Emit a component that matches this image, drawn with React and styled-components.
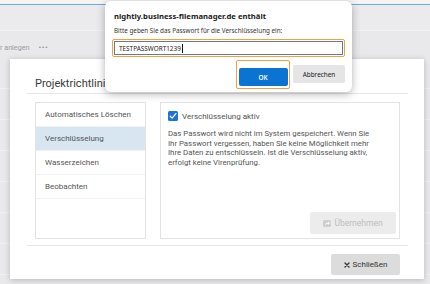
import React from "react";
import styled, { createGlobalStyle } from "styled-components";

const Global = createGlobalStyle`
  html, body { margin: 0; padding: 0; }
  body {
    width: 430px; height: 284px; overflow: hidden;
    background: #e9e9eb;
    font-family: Roboto, "Liberation Sans", sans-serif;
  }
`;

const Page = styled.div`
  position: relative;
  width: 430px;
  height: 284px;
  overflow: hidden;
  background: #e9e9eb;
`;

const TopStrip = styled.div`
  height: 4px;
  background: #f4f4f5;
  border-bottom: 1.5px solid #6ea8e2;
`;

const Toolbar = styled.div`
  height: 25px;
  background: #ebebed;
  border-bottom: 1px solid #f2f2f3;
`;

const ActionRow = styled.div`
  height: 27px;
  box-sizing: border-box;
  display: flex;
  align-items: flex-end;
  padding-bottom: 6px;
  gap: 9px;
  color: #9b9b9d;
  font-size: 7.2px;
  line-height: 9px;
`;

const Dots = styled.span`
  font-size: 8px;
  letter-spacing: 0.5px;
  color: #8f8f91;
`;

const BgRow = styled.div`
  height: 31px;
  border-bottom: 1px solid #f1f1f2;
  box-sizing: border-box;
`;

const Modal = styled.div`
  position: absolute;
  left: 10px;
  top: 59px;
  width: 414px;
  height: 220px;
  background: #fff;
  box-shadow: 0 1px 6px rgba(0, 0, 0, 0.22);
  display: flex;
  flex-direction: column;
`;

const ModalHeader = styled.div`
  margin: 0 16px 0 17px;
  padding: 19px 8px 3px;
  border-bottom: 1px solid #e6e6e6;
  font-size: 11px;
  line-height: 12px;
  color: #3a3a3a;
`;

const ModalBody = styled.div`
  margin: 0 16px 0 17px;
  padding: 8px 8px 6px;
  border-bottom: 1px solid #e6e6e6;
  display: flex;
  gap: 14px;
`;

const NavBox = styled.div`
  width: 111px;
  height: 137px;
  box-sizing: border-box;
  border: 1px solid #e3e3e3;
  display: flex;
  flex-direction: column;
`;

const NavItem = styled.div`
  height: 24px;
  box-sizing: border-box;
  padding-left: 9px;
  display: flex;
  align-items: center;
  font-size: 8px;
  color: #555;
  border-bottom: 1px solid #f2f2f2;
  background: ${(p) => (p.$active ? "#d8e6f2" : "transparent")};
`;

const Panel = styled.div`
  width: 240px;
  height: 137px;
  box-sizing: border-box;
  border: 1px solid #e3e3e3;
  padding: 8px 3px 4px 7px;
  display: flex;
  flex-direction: column;
`;

const CheckRow = styled.label`
  display: flex;
  align-items: center;
  gap: 4px;
  font-size: 8px;
  color: #555;
  height: 10px;
`;

const CheckBox = styled.span`
  width: 10px;
  height: 10px;
  border-radius: 1.5px;
  background: #1d74d8;
  display: flex;
  align-items: center;
  justify-content: center;
`;

const Desc = styled.p`
  margin: 8px 0 0 0;
  font-size: 7.8px;
  line-height: 9.7px;
  color: #555;
  width: 225px;
`;

const ApplyButton = styled.button`
  margin-top: auto;
  align-self: flex-end;
  width: 86px;
  height: 22px;
  border: none;
  border-radius: 2px;
  background: #ececec;
  color: #bdbdbd;
  font-family: inherit;
  font-size: 8.5px;
  display: flex;
  align-items: center;
  justify-content: center;
  gap: 3px;
  padding: 0;
`;

const ModalFooter = styled.div`
  margin: 0 16px 0 17px;
  padding: 8px 8px 0;
  display: flex;
  justify-content: flex-end;
`;

const CloseButton = styled.button`
  width: 69px;
  height: 21px;
  border: none;
  border-radius: 2px;
  background: #dcdcdc;
  color: #333;
  font-family: inherit;
  font-size: 8px;
  display: flex;
  align-items: center;
  justify-content: center;
  gap: 3px;
  padding: 0;
`;

const Prompt = styled.div`
  position: absolute;
  left: 105px;
  top: 1px;
  width: 247px;
  height: 91px;
  box-sizing: border-box;
  background: #fff;
  border-radius: 6px;
  box-shadow: 0 2px 9px rgba(0, 0, 0, 0.3);
  padding: 9px 7px 0 7px;
  font-family: "Noto Sans", "Open Sans", sans-serif;
  display: flex;
  flex-direction: column;
`;

const PromptTitle = styled.div`
  font-weight: 700;
  font-size: 7.7px;
  line-height: 12px;
  color: #1b1b1b;
  padding-left: 2px;
`;

const PromptMessage = styled.div`
  margin-top: 4px;
  font-size: 6.3px;
  line-height: 10px;
  color: #333;
  padding-left: 2px;
`;

const InputFrame = styled.div`
  margin-top: 3px;
  height: 18px;
  box-sizing: border-box;
  border: 1.5px solid #f2a046;
  border-radius: 2px;
  padding: 1px;
`;

const InputField = styled.div`
  height: 100%;
  box-sizing: border-box;
  border: 1px solid #777;
  display: flex;
  align-items: center;
  padding-left: 4px;
  font-size: 6.4px;
  color: #222;
`;

const Caret = styled.span`
  display: inline-block;
  width: 1px;
  height: 9px;
  background: #111;
  margin-left: 1px;
`;

const PromptButtons = styled.div`
  margin-top: 3px;
  display: flex;
  justify-content: flex-end;
  align-items: center;
  gap: 3px;
`;

const FocusRing = styled.div`
  border: 1.5px solid #f2a046;
  border-radius: 2px;
  padding: 1.5px;
`;

const PromptButton = styled.button`
  width: ${(p) => (p.$primary ? "49px" : "52px")};
  height: 18px;
  border: none;
  border-radius: 2px;
  font-family: inherit;
  font-size: 6.4px;
  padding: 0;
  background: ${(p) => (p.$primary ? "#0b74d3" : "#e5e5e5")};
  color: ${(p) => (p.$primary ? "#fff" : "#222")};
  font-weight: ${(p) => (p.$primary ? 600 : 400)};
`;

const navItems = ["Automatisches Löschen", "Verschlüsselung", "Wasserzeichen", "Beobachten"];

export default function App() {
  return (
    <>
      <Global />
      <Page>
        <TopStrip />
        <Toolbar />
        <ActionRow>
          <span>r anlegen</span>
          <Dots>•••</Dots>
        </ActionRow>
        {Array.from({ length: 8 }).map((_, i) => (
          <BgRow key={i} />
        ))}

        <Modal>
          <ModalHeader>Projektrichtlinien</ModalHeader>
          <ModalBody>
            <NavBox>
              {navItems.map((t, i) => (
                <NavItem key={t} $active={i === 1}>
                  {t}
                </NavItem>
              ))}
            </NavBox>
            <Panel>
              <CheckRow>
                <CheckBox>
                  <svg width="8" height="8" viewBox="0 0 8 8">
                    <path d="M1.2 4.2 L3.1 6.1 L6.9 1.6" fill="none" stroke="#fff" strokeWidth="1.3" strokeLinecap="round" strokeLinejoin="round" />
                  </svg>
                </CheckBox>
                Verschlüsselung aktiv
              </CheckRow>
              <Desc>
                Das Passwort wird nicht im System gespeichert. Wenn Sie
                <br />
                Ihr Passwort vergessen, haben Sie keine Möglichkeit mehr
                <br />
                Ihre Daten zu entschlüsseln. Ist die Verschlüsselung aktiv,
                <br />
                erfolgt keine Virenprüfung.
              </Desc>
              <ApplyButton disabled>
                <svg width="8" height="7" viewBox="0 0 8 7">
                  <rect x="0" y="0" width="8" height="7" rx="1.2" fill="#cfcfcf" />
                  <path d="M2 5.2 C2.3 3.4 3.4 2.7 5 2.7 L5 1.6 L6.9 3.2 L5 4.8 L5 3.7 C3.8 3.7 2.8 4.1 2 5.2 Z" fill="#fff" />
                </svg>
                Übernehmen
              </ApplyButton>
            </Panel>
          </ModalBody>
          <ModalFooter>
            <CloseButton>
              <svg width="6" height="6" viewBox="0 0 6 6">
                <path d="M1 1 L5 5 M5 1 L1 5" stroke="#333" strokeWidth="1.3" strokeLinecap="round" />
              </svg>
              Schließen
            </CloseButton>
          </ModalFooter>
        </Modal>

        <Prompt>
          <PromptTitle>nightly.business-filemanager.de enthält</PromptTitle>
          <PromptMessage>Bitte geben Sie das Passwort für die Verschlüsselung ein:</PromptMessage>
          <InputFrame>
            <InputField>
              TESTPASSWORT1239
              <Caret />
            </InputField>
          </InputFrame>
          <PromptButtons>
            <FocusRing>
              <PromptButton $primary>OK</PromptButton>
            </FocusRing>
            <PromptButton>Abbrechen</PromptButton>
          </PromptButtons>
        </Prompt>
      </Page>
    </>
  );
}
